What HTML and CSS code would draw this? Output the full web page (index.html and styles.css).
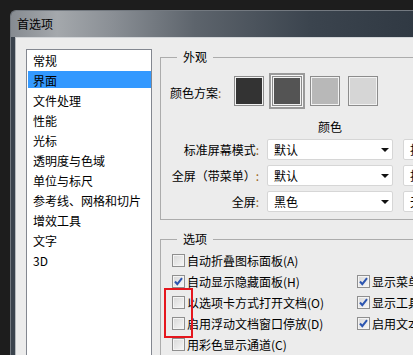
FILE: index.html
```html
<!DOCTYPE html>
<html>
<head>
    <title>首选项</title>
    <link rel="stylesheet" href="styles.css">
</head>
<body>
    <div class="window">
        <div class="titlebar">首选项</div>
        <div class="frame">
            <div class="client">
                <div class="list">
                    <div class="item">常规</div>
                    <div class="item sel">界面</div>
                    <div class="item">文件处理</div>
                    <div class="item">性能</div>
                    <div class="item">光标</div>
                    <div class="item">透明度与色域</div>
                    <div class="item">单位与标尺</div>
                    <div class="item">参考线、网格和切片</div>
                    <div class="item">增效工具</div>
                    <div class="item">文字</div>
                    <div class="item">3D</div>
                </div>

                <div class="panel">
                    <fieldset class="group">
                        <legend>外观</legend>
                        <div class="scheme">
                            <span class="scheme-label">颜色方案<span class="colon">:</span></span>
                            <div class="swatches">
                                <span class="swatch s1"></span>
                                <span class="swatch s2 current"></span>
                                <span class="swatch s3"></span>
                                <span class="swatch s4"></span>
                            </div>
                        </div>
                        <div class="heads">
                            <span></span>
                            <span class="head">颜色</span>
                            <span class="head"></span>
                        </div>
                        <div class="modes">
                            <span class="mode-label">标准屏幕模式<span class="colon">:</span></span>
                            <div class="select"><span>默认</span><i class="arrow"></i></div>
                            <div class="select second"><span>投影</span><i class="arrow"></i></div>

                            <span class="mode-label">全屏（带菜单）<span class="colon">:</span></span>
                            <div class="select"><span>默认</span><i class="arrow"></i></div>
                            <div class="select second"><span>投影</span><i class="arrow"></i></div>

                            <span class="mode-label">全屏<span class="colon">:</span></span>
                            <div class="select"><span>黑色</span><i class="arrow"></i></div>
                            <div class="select second"><span>无</span><i class="arrow"></i></div>
                        </div>
                    </fieldset>

                    <fieldset class="group options">
                        <legend>选项</legend>
                        <div class="checks">
                            <label class="check"><span class="box"></span>自动折叠图标面板(A)</label>
                            <span></span>

                            <label class="check"><span class="box"><svg viewBox="0 0 13 13" width="13" height="13"><path d="M3 6.5 L5.3 9.2 L10 3.2" fill="none" stroke="#2c55b0" stroke-width="2"/></svg></span>自动显示隐藏面板(H)</label>
                            <label class="check"><span class="box"><svg viewBox="0 0 13 13" width="13" height="13"><path d="M3 6.5 L5.3 9.2 L10 3.2" fill="none" stroke="#2c55b0" stroke-width="2"/></svg></span>显示菜单颜色</label>

                            <label class="check"><span class="box"></span>以选项卡方式打开文档(O)</label>
                            <label class="check"><span class="box"><svg viewBox="0 0 13 13" width="13" height="13"><path d="M3 6.5 L5.3 9.2 L10 3.2" fill="none" stroke="#2c55b0" stroke-width="2"/></svg></span>显示工具提示</label>

                            <label class="check"><span class="box"></span>启用浮动文档窗口停放(D)</label>
                            <label class="check"><span class="box"><svg viewBox="0 0 13 13" width="13" height="13"><path d="M3 6.5 L5.3 9.2 L10 3.2" fill="none" stroke="#2c55b0" stroke-width="2"/></svg></span>启用文本投影</label>

                            <label class="check"><span class="box"></span>用彩色显示通道(C)</label>
                            <span></span>
                        </div>
                    </fieldset>
                </div>
            </div>
        </div>
    </div>

    <div class="mark"></div>
</body>
</html>
```

FILE: styles.css
```css
body {
    margin: 0;
    width: 413px;
    height: 355px;
    overflow: hidden;
    background-color: #1d1d1d;
    font-family: "Noto Sans CJK SC", "DejaVu Sans", sans-serif;
    font-size: 12px;
    color: #000;
}
.window {
    margin: 10px 0 0 10px;
    width: 460px;
    height: 360px;
    border: 1px solid #737980;
    border-right: none;
    border-bottom: none;
    border-radius: 6px 0 0 0;
    background-color: #3a434d;
    overflow: hidden;
}
.titlebar {
    height: 26px;
    line-height: 25px;
    padding-left: 6px;
    background: linear-gradient(90deg, #868b91 0, #a4a8ac 10%, #8a8f95 22%, #5d646c 40%, #3b444e 65%, #2a333d 100%);
}
.frame {
    padding-left: 4px;
}
.client {
    display: flex;
    align-items: flex-start;
    height: 330px;
    padding: 11px 0 0 10px;
    background-color: #ececec;
    border-left: 1px solid #b4b8bc;
    border-top: 1px solid #d2d5d8;
}
.list {
    flex: none;
    width: 126px;
    height: 320px;
    box-sizing: border-box;
    border: 1px solid #838790;
    background-color: #fff;
    padding-top: 1px;
}
.item {
    height: 20px;
    line-height: 20px;
    padding-left: 6px;
    white-space: nowrap;
}
.item.sel {
    background: linear-gradient(#3399ff, #3399ff) no-repeat 1px 0 / 123px 17px;
}
.panel {
    flex: none;
    margin-left: 8px;
    width: 300px;
}
.group {
    margin: 0;
    padding: 0 0 7px 9px;
    border: 1px solid #acacac;
    min-width: 0;
}
.group legend {
    margin-left: 7px;
    padding: 0 6px;
    line-height: 16px;
}
.colon {
    color: #9a6418;
}
.scheme {
    display: flex;
    align-items: center;
    height: 36px;
    margin-top: 8px;
}
.scheme-label {
    width: 64px;
    padding-top: 3px;
}
.swatches {
    display: flex;
    gap: 8px;
}
.swatch {
    width: 30px;
    height: 30px;
    box-sizing: border-box;
    border: 1px solid #8c8c8c;
    box-shadow: inset 0 0 0 1px #f2f2f2;
}
.s1 { background-color: #333333; }
.s2 { background-color: #545454; }
.s3 { background-color: #b8b8b8; }
.s4 { background-color: #d6d6d6; }
.swatch.current {
    box-shadow: inset 0 0 0 1px #f2f2f2, 0 0 0 1px #f6f6f6, 0 0 0 3px #9a9a9a;
}
.heads,
.modes {
    display: grid;
    grid-template-columns: 89px 126px 126px;
    column-gap: 8px;
}
.heads {
    margin-top: 10px;
    line-height: 16px;
}
.head {
    text-align: center;
}
.modes {
    margin-top: 4px;
    grid-auto-rows: 21px;
    row-gap: 5px;
}
.mode-label {
    text-align: right;
    line-height: 21px;
    white-space: nowrap;
}
.select {
    display: flex;
    align-items: center;
    justify-content: space-between;
    box-sizing: border-box;
    padding: 0 3px 0 6px;
    background-color: #fff;
    border: 1px solid #d6d6d6;
    border-radius: 2px;
}
.select.second {
    margin-left: 2px;
}
.arrow {
    width: 0;
    height: 0;
    border-left: 4px solid transparent;
    border-right: 4px solid transparent;
    border-top: 4px solid #111;
}
.options {
    margin-top: 11px;
    padding-bottom: 20px;
}
.checks {
    display: grid;
    grid-template-columns: 185px 1fr;
    grid-auto-rows: 21px;
    margin-top: 3px;
    padding-left: 2px;
}
.check {
    display: flex;
    align-items: center;
    gap: 2px;
    white-space: nowrap;
}
.box {
    width: 13px;
    height: 13px;
    box-sizing: border-box;
    border: 1px solid #8f8f8f;
    background: linear-gradient(135deg, #d8d8d8, #f7f7f7);
    box-shadow: inset 0 0 0 1px #f4f4f4;
    position: relative;
}
.box svg {
    position: absolute;
    left: -1px;
    top: -1px;
}
.mark {
    position: absolute;
    left: 164px;
    top: 288px;
    width: 29px;
    height: 50px;
    box-sizing: border-box;
    border: 2px solid #e5161d;
}
```
